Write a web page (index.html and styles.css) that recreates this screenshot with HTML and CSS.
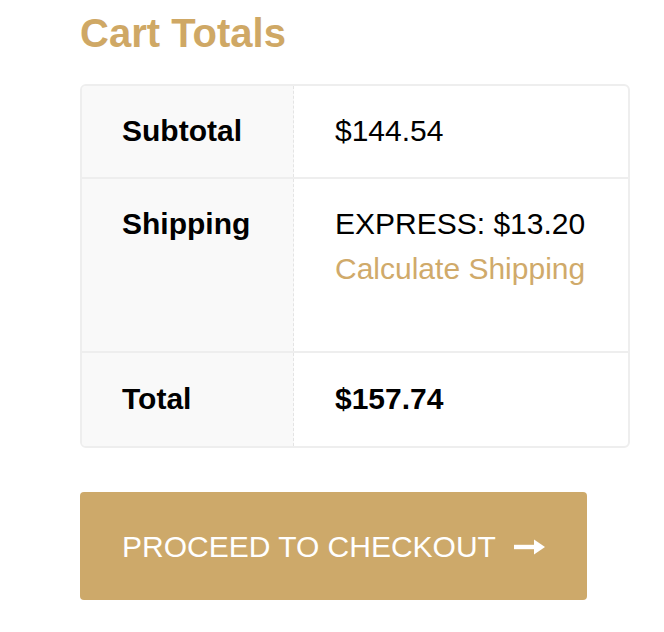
FILE: index.html
```html
<!DOCTYPE html>
<html>
<head>
<meta charset="utf-8">
<link rel="stylesheet" href="styles.css">
</head>
<body>
<div class="cart">
  <h2 class="title">Cart Totals</h2>
  <div class="totals">
    <div class="row">
      <div class="label">Subtotal</div>
      <div class="value">$144.54</div>
    </div>
    <div class="row">
      <div class="label">Shipping</div>
      <div class="value">
        <div>EXPRESS: $13.20</div>
        <a class="calc" href="#">Calculate Shipping</a>
      </div>
    </div>
    <div class="row row-total">
      <div class="label">Total</div>
      <div class="value strong">$157.74</div>
    </div>
  </div>
  <a class="checkout" href="#">PROCEED TO CHECKOUT<svg class="arrow" width="31" height="16" viewBox="0 0 31 16"><rect x="0" y="5.8" width="22" height="4.4" fill="#fff"/><polygon points="20,0.5 31,8 20,15.5" fill="#fff"/></svg></a>
</div>
</body>
</html>
```
FILE: styles.css
```css
html, body {
  margin: 0;
  padding: 0;
  background: #fff;
}
body {
  font-family: "Liberation Sans", Arial, sans-serif;
  color: #000;
}
.cart {
  padding: 9px 0 0 80px;
}
.title {
  margin: 0;
  font-size: 40px;
  line-height: 48px;
  font-weight: bold;
  color: #cfa865;
}
.totals {
  margin-top: 27px;
  width: 550px;
  box-sizing: border-box;
  border: 2px solid #eeeeee;
  border-radius: 6px;
  overflow: hidden;
  font-size: 30px;
  line-height: 45px;
}
.row {
  display: grid;
  grid-template-columns: 212px 1fr;
}
.row + .row {
  border-top: 2px solid #eeeeee;
}
.label {
  background: #f9f9f9;
  font-weight: bold;
  padding: 22px 20px 24px 40px;
  border-right: 1px dashed #e4e4e4;
}
.value {
  padding: 22px 20px 24px 41px;
}
.row-total .label,
.row-total .value {
  padding-top: 23px;
  padding-bottom: 25px;
}
.strong {
  font-weight: bold;
}
.calc {
  display: block;
  color: #d0aa6a;
  text-decoration: none;
  margin-bottom: 36px;
}
.checkout {
  display: inline-flex;
  align-items: center;
  margin-top: 44px;
  padding: 32px 42px 31px 42px;
  background: #cda96a;
  color: #fff;
  border-radius: 4px;
  font-size: 30px;
  line-height: 45px;
  text-decoration: none;
}
.arrow {
  margin-left: 18px;
  display: block;
}
```
